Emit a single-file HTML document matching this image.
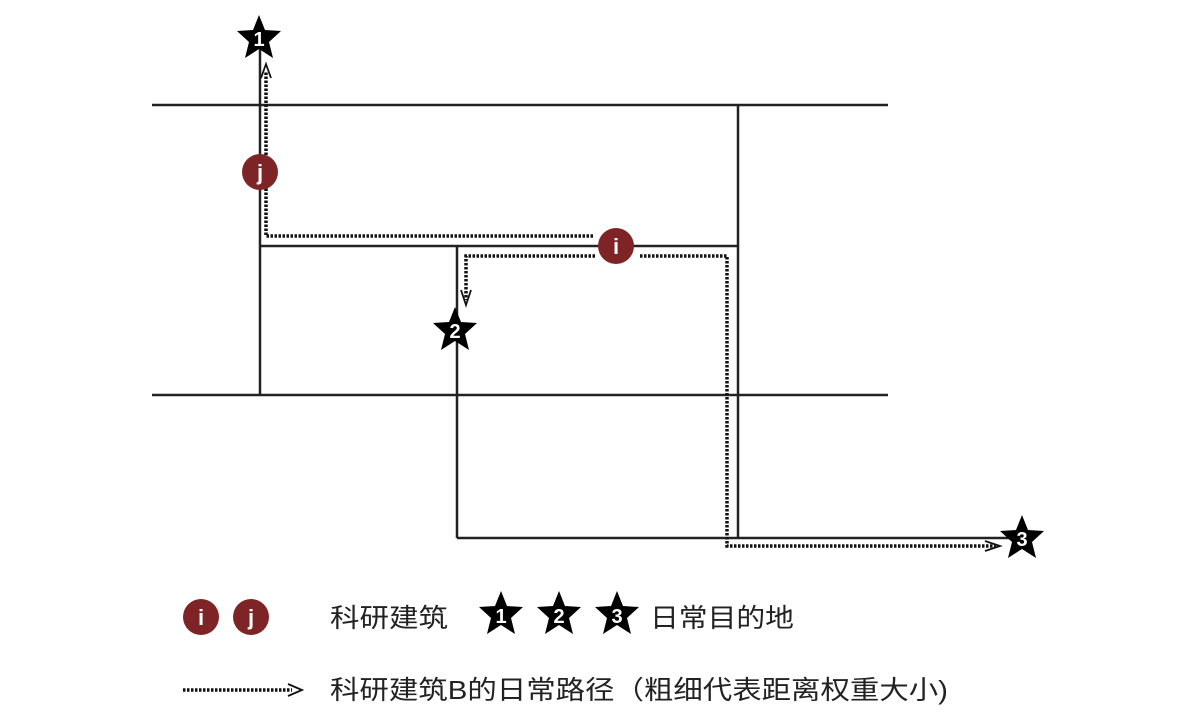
<!DOCTYPE html>
<html><head><meta charset="utf-8"><style>
html,body{margin:0;padding:0;background:#fff;}
svg{display:block}
text{font-family:"Liberation Sans","Noto Sans CJK SC",sans-serif;}
</style></head><body>
<svg width="1190" height="726" viewBox="0 0 1190 726" xmlns="http://www.w3.org/2000/svg">
<defs>
<polygon id="st" points="0,-23 6,-8 22,-7 10,4 14,20 0,11 -14,20 -10,4 -22,-7 -6,-8" fill="#000"/>
</defs>
<g stroke="#222" stroke-width="2.5" fill="none">
<line x1="152" y1="105" x2="888" y2="105"/>
<line x1="152" y1="395" x2="888" y2="395"/>
<line x1="260" y1="40" x2="260" y2="395"/>
<line x1="738" y1="105" x2="738" y2="538"/>
<line x1="260" y1="246" x2="738" y2="246"/>
<line x1="457" y1="246" x2="457" y2="538"/>
<line x1="457" y1="538" x2="1010" y2="538"/>
</g>
<g stroke="#111" stroke-width="3.5" stroke-dasharray="2.5 1.5" fill="none">
<polyline points="593,236 266,236 266,72"/>
<polyline points="595,256 466,256 466,300"/>
<polyline points="640,256 727,256 727,546 996,546"/>
<line x1="183" y1="690" x2="292" y2="690"/>
</g>
<g stroke="#111" stroke-width="1.8" fill="none">
<polyline points="261,78 266,64 271,78"/>
<polyline points="461,290 466,305 471,290"/>
<polyline points="985,541 1000,546 985,551"/>
<polyline points="288,684 302,690 288,696"/>
</g>
<g fill="#7f2426"><circle cx="260" cy="172" r="18"/><circle cx="616" cy="246" r="18"/>
<circle cx="201" cy="617" r="18"/><circle cx="251" cy="617" r="18"/></g>
<g fill="#fff" font-weight="bold" font-size="22" text-anchor="middle">
<text x="260" y="180">j</text><text x="616" y="254">i</text>
<text x="201" y="625">i</text><text x="251" y="625">j</text></g>
<use href="#st" x="259" y="38"/><use href="#st" x="455" y="330"/><use href="#st" x="1022" y="538"/>
<use href="#st" x="501" y="614"/><use href="#st" x="559" y="614"/><use href="#st" x="617" y="614"/>
<g fill="#fff" font-weight="bold" font-size="20" text-anchor="middle">
<text x="259" y="46">1</text><text x="455" y="338">2</text><text x="1022" y="546">3</text>
<text x="501" y="623">1</text><text x="559" y="623">2</text><text x="617" y="623">3</text></g>
<g fill="#222" font-size="26">
<text x="330" y="627" textLength="118" lengthAdjust="spacingAndGlyphs">科研建筑</text>
<text x="650" y="627" textLength="144" lengthAdjust="spacingAndGlyphs">日常目的地</text>
<text x="330" y="699" textLength="618" lengthAdjust="spacingAndGlyphs">科研建筑B的日常路径（粗细代表距离权重大小)</text>
</g>
</svg>
</body></html>
